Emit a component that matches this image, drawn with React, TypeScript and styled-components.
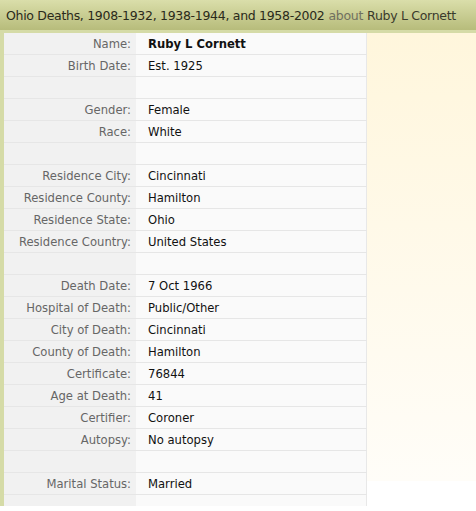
import React from "react";
import styled, { createGlobalStyle } from "styled-components";

const Global = createGlobalStyle`
  html, body { margin: 0; padding: 0; background: #fff; }
  body { font-family: "DejaVu Sans", Verdana, sans-serif; }
`;

const Header = styled.div`
  height: 30px;
  display: flex;
  align-items: center;
  padding-left: 6px;
  background: linear-gradient(#dadeaa, #b7bc7b);
  font-family: "DejaVu Sans", Verdana, sans-serif;
  font-size: 12.5px;
  color: #2a2a1a;
  white-space: nowrap;
  letter-spacing: -0.3px;
`;

const About = styled.span`
  color: #707060;
  margin: 0 4px;
`;

const Name = styled.span`
  color: #3a3a2c;
`;

const Body = styled.div`
  display: flex;
  align-items: flex-start;
  border-top: 3px solid #d5dba7;
`;

const TableWrap = styled.div`
  border-left: 4px solid #d5dba7;
  width: 363px;
  flex: none;
`;

const Row = styled.div<{ $last?: boolean }>`
  display: grid;
  grid-template-columns: 132px 1fr;
  box-sizing: border-box;
  height: ${(p) => (p.$last ? "11px" : "22px")};
  border-bottom: ${(p) => (p.$last ? "none" : "1px solid #e6e6e6")};
  font-size: 11.6px;
  line-height: 20px;
  overflow: hidden;
`;

const Label = styled.div`
  box-sizing: border-box;
  background: #f1f1f1;
  color: #666;
  text-align: right;
  padding: 1px 5px 0 0;
  white-space: nowrap;
`;

const Value = styled.div<{ $bold?: boolean }>`
  box-sizing: border-box;
  background: #fafafa;
  border-right: 1px solid #e8e8e8;
  color: #111;
  padding: 1px 0 0 12px;
  font-weight: ${(p) => (p.$bold ? 700 : 400)};
  white-space: nowrap;
`;

const Side = styled.div`
  flex: 1;
  height: 448px;
  background: linear-gradient(#fff6dc, #fffdf8);
`;

const rows: [string, string][] = [
  ["Name:", "Ruby L Cornett"],
  ["Birth Date:", "Est. 1925"],
  ["", ""],
  ["Gender:", "Female"],
  ["Race:", "White"],
  ["", ""],
  ["Residence City:", "Cincinnati"],
  ["Residence County:", "Hamilton"],
  ["Residence State:", "Ohio"],
  ["Residence Country:", "United States"],
  ["", ""],
  ["Death Date:", "7 Oct 1966"],
  ["Hospital of Death:", "Public/Other"],
  ["City of Death:", "Cincinnati"],
  ["County of Death:", "Hamilton"],
  ["Certificate:", "76844"],
  ["Age at Death:", "41"],
  ["Certifier:", "Coroner"],
  ["Autopsy:", "No autopsy"],
  ["", ""],
  ["Marital Status:", "Married"],
];

export default function App() {
  return (
    <>
      <Global />
      <Header>
        Ohio Deaths, 1908-1932, 1938-1944, and 1958-2002<About>about</About>
        <Name>Ruby L Cornett</Name>
      </Header>
      <Body>
        <TableWrap>
          {rows.map(([l, v], i) => (
            <Row key={i}>
              <Label>{l}</Label>
              <Value $bold={i === 0}>{v}</Value>
            </Row>
          ))}
          <Row $last>
            <Label />
            <Value />
          </Row>
        </TableWrap>
        <Side />
      </Body>
    </>
  );
}
